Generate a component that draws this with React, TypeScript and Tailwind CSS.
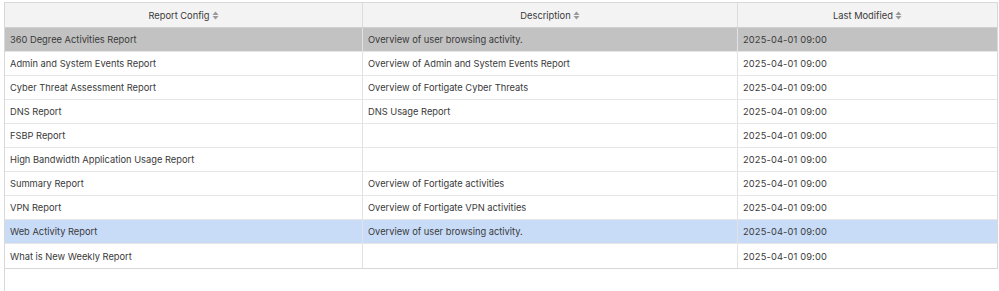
import React from 'react';

const rows = [
  { name: '360 Degree Activities Report', desc: 'Overview of user browsing activity.', state: 'selected' },
  { name: 'Admin and System Events Report', desc: 'Overview of Admin and System Events Report' },
  { name: 'Cyber Threat Assessment Report', desc: 'Overview of Fortigate Cyber Threats' },
  { name: 'DNS Report', desc: 'DNS Usage Report' },
  { name: 'FSBP Report', desc: '' },
  { name: 'High Bandwidth Application Usage Report', desc: '' },
  { name: 'Summary Report', desc: 'Overview of Fortigate activities' },
  { name: 'VPN Report', desc: 'Overview of Fortigate VPN activities' },
  { name: 'Web Activity Report', desc: 'Overview of user browsing activity.', state: 'hover' },
  { name: 'What is New Weekly Report', desc: '' },
];

const SortIcon = () => (
  <svg width="7" height="9" viewBox="0 0 7 9" className="ml-[2px] inline-block">
    <path d="M3.5 0.5 L6.5 4 L0.5 4 Z" fill="#9a9a9a" />
    <path d="M3.5 8.5 L6.5 5 L0.5 5 Z" fill="#9a9a9a" />
  </svg>
);

const HeadCell = ({ label, w }: { label: string; w: string }) => (
  <div className={`${w} flex items-center justify-center pt-px border-r border-[#dcdcdc] last:border-r-0`}>
    <span>{label}</span>
    <SortIcon />
  </div>
);

export default function App() {
  return (
    <div
      className="h-[291px] w-[999px] bg-white pl-[4px] pt-[2px] text-[9.3px] text-[#3a3a3a]"
      style={{ fontFamily: 'Inter, "Noto Sans", sans-serif' }}
    >
      <div className="h-full w-[994px] border-l border-[#d8d8d8]">
        <div className="border-t border-r border-b border-[#d8d8d8]">
          {/* Header */}
          <div className="flex h-[25px] bg-[#f3f3f3] border-b border-[#d0d0d0]">
            <HeadCell label="Report Config" w="w-[358px]" />
            <HeadCell label="Description" w="w-[375px]" />
            <HeadCell label="Last Modified" w="flex-1" />
          </div>

          {/* Rows */}
          {rows.map((r) => (
            <div
              key={r.name}
              className={`flex h-[24px] border-b border-[#e6e6e6] last:border-b-0 ${
                r.state === 'selected' ? 'bg-[#c2c2c2]' : r.state === 'hover' ? 'bg-[#c8dcf8]' : 'bg-white'
              }`}
            >
              <div className="flex w-[358px] items-center border-r border-[#e2e2e2] pl-[5px] pt-px">{r.name}</div>
              <div className="flex w-[375px] items-center border-r border-[#e2e2e2] pl-[5px] pt-px">{r.desc}</div>
              <div className="flex flex-1 items-center pl-[5px] pt-px tracking-[0.15px]">2025-04-01 09:00</div>
            </div>
          ))}
        </div>
      </div>
    </div>
  );
}
